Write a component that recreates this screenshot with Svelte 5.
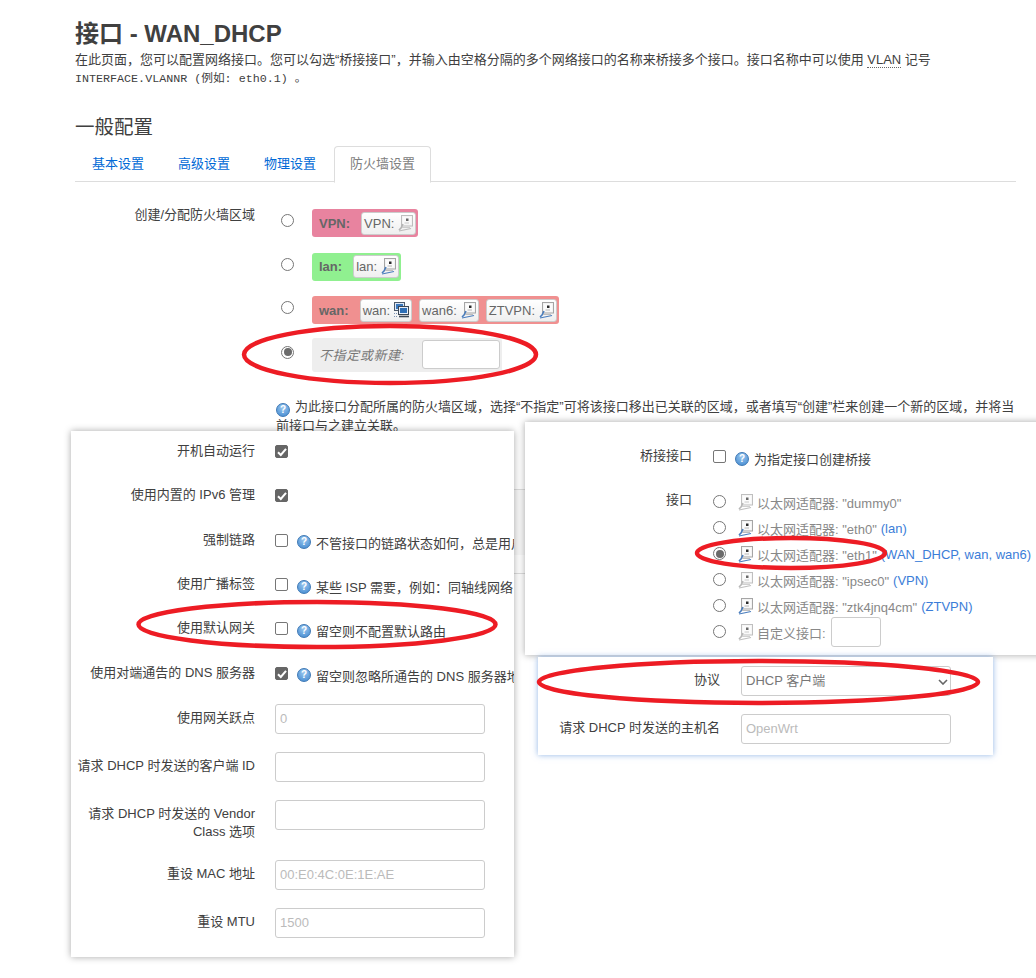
<script lang="ts">
  const zones = [
    { name: "VPN:", color: "#e8839f", chips: [{ label: "VPN:", icon: "port", dim: true }] },
    { name: "lan:", color: "#90f090", chips: [{ label: "lan:", icon: "port", dim: false }] },
    {
      name: "wan:",
      color: "#f09090",
      chips: [
        { label: "wan:", icon: "net", dim: false },
        { label: "wan6:", icon: "port", dim: false },
        { label: "ZTVPN:", icon: "port", dim: false },
      ],
    },
  ];

  const adapters = [
    { name: '以太网适配器: "dummy0"', link: "", dim: true },
    { name: '以太网适配器: "eth0"', link: "(lan)", dim: false },
    { name: '以太网适配器: "eth1"', link: "(WAN_DHCP, wan, wan6)", dim: false, on: true },
    { name: '以太网适配器: "ipsec0"', link: "(VPN)", dim: true },
    { name: '以太网适配器: "ztk4jnq4cm"', link: "(ZTVPN)", dim: false },
  ];

  const checkRows = [
    { label: "开机自动运行", on: true, help: "" },
    { label: "使用内置的 IPv6 管理", on: true, help: "" },
    { label: "强制链路", on: false, help: "不管接口的链路状态如何，总是用户" },
    { label: "使用广播标签", on: false, help: "某些 ISP 需要，例如：同轴线网络" },
    { label: "使用默认网关", on: false, help: "留空则不配置默认路由" },
    { label: "使用对端通告的 DNS 服务器", on: true, help: "留空则忽略所通告的 DNS 服务器地" },
  ];

  const inputRows = [
    { label: "使用网关跃点", placeholder: "0" },
    { label: "请求 DHCP 时发送的客户端 ID", placeholder: "" },
    { label: "请求 DHCP 时发送的 Vendor Class 选项", placeholder: "" },
    { label: "重设 MAC 地址", placeholder: "00:E0:4C:0E:1E:AE" },
    { label: "重设 MTU", placeholder: "1500" },
  ];

  const rings = [
    { cx: 390, cy: 354.5, rx: 146, ry: 28.5 },
    { cx: 317, cy: 624.5, rx: 178.5, ry: 22.5 },
    { cx: 791, cy: 553, rx: 94, ry: 15 },
    { cx: 758.5, cy: 682, rx: 219.5, ry: 21 },
  ];
</script>

{#snippet help()}
  <span class="help">?</span>
{/snippet}

{#snippet port(dim = false)}
  <svg class="ico" class:dim width="15" height="17" viewBox="0 0 15 17">
    <rect x="3.5" y="0.5" width="11" height="10.5" fill="#f3f3f3" stroke="#a5a5a5" />
    <rect x="5" y="2" width="8" height="7.5" fill="#fbfbfb" />
    <rect x="8" y="3.5" width="2.5" height="2.5" fill="#2b2b2b" />
    <path d="M6.5 8 H11" stroke="#b5b5b5" />
    <path d="M5 9 L3 13 L1 15" fill="none" stroke={dim ? "#9a9a9a" : "#4a7dbd"} stroke-width="1.6" />
    <path d="M1 16 L13 13.5" stroke={dim ? "#a5a5a5" : "#4a7dbd"} stroke-width="1.1" />
    <path d="M4 12.5 H12" stroke="#bdbdbd" stroke-width="1" />
  </svg>
{/snippet}

{#snippet net()}
  <svg class="ico" width="15" height="16" viewBox="0 0 15 16">
    <rect x="0.5" y="0.5" width="10" height="8" fill="#dfe8f5" stroke="#4d5a6b" />
    <rect x="2" y="2" width="7" height="5" fill="#3a78bd" />
    <rect x="4.5" y="4.5" width="10" height="8" fill="#e8eef8" stroke="#3d4855" />
    <rect x="6" y="6" width="7" height="5" fill="#2f6fb5" />
    <path d="M5 14.5 H15" stroke="#3d4855" stroke-width="1.6" />
    <path d="M0 11.5 H3 M0 14.5 H3" stroke="#7d93b5" stroke-width="1" stroke-dasharray="1 1" />
  </svg>
{/snippet}

{#snippet check(on)}
  <span class="check" class:on>
    {#if on}
      <svg width="14" height="14" viewBox="0 0 14 14">
        <path d="M3 7.2 L5.8 10 L11 3.8" fill="none" stroke="#fff" stroke-width="2" />
      </svg>
    {/if}
  </span>
{/snippet}

<div class="canvas">
  <div class="page">
    <h2>接口 - WAN_DHCP</h2>
    <p class="desc">
      在此页面，您可以配置网络接口。您可以勾选“桥接接口”，并输入由空格分隔的多个网络接口的名称来桥接多个接口。接口名称中可以使用 <abbr>VLAN</abbr> 记号<br />
      <code>INTERFACE.VLANNR (例如: eth0.1) 。</code>
    </p>
    <h3>一般配置</h3>
    <ul class="tabs">
      <li>基本设置</li>
      <li>高级设置</li>
      <li>物理设置</li>
      <li class="active">防火墙设置</li>
    </ul>

    <div class="zone-form">
      <div class="zone-label">创建/分配防火墙区域</div>
      <div class="zone-list">
        {#each zones as zone}
          <div class="zone-row">
            <span class="radio"></span>
            <div class="zone" style="background: {zone.color}">
              <b>{zone.name}</b>
              {#each zone.chips as chip}
                <span class="chip">
                  {chip.label}
                  {#if chip.icon === "net"}{@render net()}{:else}{@render port(chip.dim)}{/if}
                </span>
              {/each}
            </div>
          </div>
        {/each}
        <div class="zone-row last">
          <span class="radio on"></span>
          <div class="zone blank">
            <i>不指定或新建:</i>
            <span class="box"></span>
          </div>
        </div>
        <p class="zone-help">
          {@render help()}为此接口分配所属的防火墙区域，选择“不指定”可将该接口移出已关联的区域，或者填写“创建”栏来创建一个新的区域，并将当前接口与之建立关联。
        </p>
      </div>
    </div>
    <div class="band"></div>
    <div class="rule"></div>
  </div>

  <section class="panel left">
    {#each checkRows as row}
      <div class="row">
        <label class="lab" for="">{row.label}</label>
        {@render check(row.on)}
        {#if row.help}
          <span class="hint">{@render help()}{row.help}</span>
        {/if}
      </div>
    {/each}
    {#each inputRows as row}
      <div class="row field">
        <label class="lab" for="">{row.label}</label>
        <span class="box wide">{row.placeholder}</span>
      </div>
    {/each}
  </section>

  <section class="panel right">
    <div class="row bridge">
      <label class="lab" for="">桥接接口</label>
      {@render check(false)}
      <span class="hint">{@render help()}为指定接口创建桥接</span>
    </div>
    <div class="row ports">
      <label class="lab" for="">接口</label>
      <div class="port-list">
        {#each adapters as item}
          <div class="port-row">
            <span class="radio" class:on={item.on}></span>
            {@render port(item.dim)}
            <span>{item.name}</span>
            {#if item.link}<span class="link">{item.link}</span>{/if}
          </div>
        {/each}
        <div class="port-row">
          <span class="radio"></span>
          {@render port(true)}
          <span>自定义接口:</span>
          <span class="box small"></span>
        </div>
      </div>
    </div>
  </section>

  <section class="panel blue">
    <div class="row field">
      <label class="lab" for="">协议</label>
      <span class="box wide select">
        DHCP 客户端
        <svg width="10" height="6" viewBox="0 0 10 6">
          <path d="M1 1 L5 5 L9 1" fill="none" stroke="#666" stroke-width="1.6" />
        </svg>
      </span>
    </div>
    <div class="row field">
      <label class="lab" for="">请求 DHCP 时发送的主机名</label>
      <span class="box wide">OpenWrt</span>
    </div>
  </section>

  <svg class="rings" width="1036" height="978" viewBox="0 0 1036 978">
    {#each rings as r}
      <ellipse cx={r.cx} cy={r.cy} rx={r.rx} ry={r.ry} fill="none" stroke="#ed1c24" stroke-width="4.5" />
    {/each}
  </svg>
</div>

<style>
  :global(body) {
    margin: 0;
    background: #fff;
  }

  .canvas {
    position: relative;
    width: 1036px;
    height: 978px;
    overflow: hidden;
    font-family: "Liberation Sans", "Noto Sans CJK SC", sans-serif;
    font-size: 13px;
    color: #404040;
  }

  .page {
    padding: 20px 20px 0 75px;
  }

  h2 {
    margin: 0;
    font-size: 24px;
    line-height: 28px;
    color: #404040;
  }

  .desc {
    margin: 3px 0 0;
    line-height: 18px;
  }

  abbr {
    border-bottom: 1px dotted #666;
  }

  code {
    font-family: "Liberation Mono", "Noto Sans CJK SC", monospace;
    font-size: 11.7px;
  }

  h3 {
    margin: 25px 0 0;
    font-size: 19.5px;
    font-weight: 400;
    line-height: 28px;
  }

  .tabs {
    display: flex;
    margin: 5px 0 0;
    padding: 0;
    list-style: none;
    height: 35px;
    border-bottom: 1px solid #ddd;
  }

  .tabs li {
    padding: 0 17px;
    line-height: 35px;
    color: #0069d6;
  }

  .tabs .active {
    margin-left: 1px;
    padding: 0 15px;
    height: 35px;
    line-height: 34px;
    color: #808080;
    background: #fff;
    border: 1px solid #ddd;
    border-bottom: 1px solid #fff;
    border-radius: 4px 4px 0 0;
  }

  .zone-form {
    display: flex;
    margin-top: 24px;
  }

  .zone-label {
    width: 180px;
    text-align: right;
    line-height: 18px;
  }

  .zone-list {
    margin-left: 26px;
    padding-top: 3px;
    flex: 1;
    min-width: 0;
  }

  .zone-row {
    display: flex;
    align-items: center;
    height: 28px;
    margin-bottom: 15.5px;
    margin-top: 0;
  }

  .zone-row.last {
    height: 34px;
    margin-top: -2px;
    margin-bottom: 0;
  }

  .radio {
    position: relative;
    flex: none;
    box-sizing: border-box;
    width: 13px;
    height: 13px;
    border: 1px solid #767676;
    border-radius: 50%;
    background: #fff;
    margin-right: 18px;
    margin-top: -5px;
  }

  .radio.on::after {
    content: "";
    position: absolute;
    inset: 1.5px;
    border-radius: 50%;
    background: #6b6b6b;
  }

  .zone {
    display: flex;
    align-items: center;
    gap: 7px;
    height: 100%;
    padding: 0 2px 0 7px;
    border-radius: 3px;
  }

  .zone b {
    color: #666;
    margin-right: 4px;
  }

  .chip {
    display: flex;
    align-items: center;
    gap: 4px;
    height: 23px;
    padding: 0 2px;
    box-sizing: border-box;
    border: 1px solid #ccc;
    border-radius: 3px;
    background: linear-gradient(#fff, #efefef);
    color: #666;
  }

  .zone.blank {
    background: #eee;
    width: 190px;
    box-sizing: border-box;
    gap: 0;
  }

  .zone.blank i {
    color: #777;
    white-space: nowrap;
    margin-right: 17px;
    letter-spacing: 0.6px;
  }

  .zone.blank .box {
    width: 78px;
    height: 29px;
  }

  .box {
    display: block;
    box-sizing: border-box;
    flex: none;
    background: #fff;
    border: 1px solid #ccc;
    border-radius: 3px;
  }

  .zone-help {
    margin: 26px 0 0 -5px;
    line-height: 18px;
  }

  .help {
    display: inline-block;
    width: 14px;
    height: 14px;
    margin-right: 5px;
    border-radius: 50%;
    border: 1px solid #3d78b5;
    box-sizing: border-box;
    background: radial-gradient(circle at 50% 30%, #9cc8ef, #3f87cf);
    color: #fff;
    font-size: 10px;
    font-weight: 700;
    line-height: 12px;
    text-align: center;
    vertical-align: -2px;
  }

  .band {
    margin: 54px 0 0;
    height: 65px;
    background: #f8f8f8;
    border-top: 1px solid #ddd;
  }

  .rule {
    margin-top: 18px;
    border-top: 1px solid #ddd;
  }

  .panel {
    position: absolute;
    box-sizing: border-box;
    background: #fff;
    box-shadow: 0 0 7px rgba(0, 0, 0, 0.35);
  }

  .panel.left {
    left: 71px;
    top: 431px;
    width: 443px;
    height: 526px;
    padding: 8px 0 0;
    overflow: hidden;
  }

  .panel.right {
    left: 525px;
    top: 422px;
    width: 520px;
    height: 233px;
    overflow: hidden;
  }

  .panel.blue {
    left: 538px;
    top: 657px;
    width: 455px;
    height: 98px;
    padding-top: 9px;
    box-shadow: 0 0 6px rgba(74, 134, 214, 0.6);
  }

  .row {
    display: flex;
    align-items: center;
    white-space: nowrap;
    height: 26.3px;
    margin-bottom: 18px;
  }

  .panel.left .row:nth-child(6) {
    margin-bottom: 17px;
  }

  .lab {
    flex: none;
    width: 184px;
    text-align: right;
    white-space: normal;
    line-height: 18px;
    margin-right: 20px;
    position: relative;
    top: -1px;
  }

  .panel.blue .lab {
    width: 182px;
    margin-right: 21px;
  }

  .check {
    flex: none;
    box-sizing: border-box;
    width: 13px;
    height: 13px;
    border: 1px solid #767676;
    border-radius: 2px;
    background: #fff;
    display: block;
    margin-top: -1px;
  }

  .check.on {
    background: #666;
    border-color: #666;
  }

  .check svg {
    display: block;
    margin: -1px;
  }

  .hint {
    display: inline-flex;
    align-items: center;
    margin-left: 9px;
    margin-top: 3px;
  }

  .row.field {
    align-items: flex-start;
    height: auto;
    min-height: 30px;
    margin-bottom: 18px;
  }

  .row.field .lab {
    top: 5px;
  }

  .panel.left .row.field:nth-child(9) {
    min-height: 42px;
  }

  .box.wide {
    width: 210px;
    height: 30px;
    line-height: 28px;
    padding: 0 4px;
    color: #bbb;
    overflow: hidden;
  }

  .select {
    position: relative;
    color: #777 !important;
  }

  .select svg {
    position: absolute;
    right: 2px;
    top: 12px;
  }

  .row.bridge {
    height: 18px;
    margin: 26px 0 0;
  }

  .row.bridge .lab,
  .row.ports .lab {
    width: 167px;
    margin-right: 21px;
  }

  .row.ports {
    align-items: flex-start;
    height: auto;
    margin: 23px 0 0;
  }

  .row.ports .lab {
    top: 2px;
  }

  .port-list {
    display: flex;
    flex-direction: column;
    margin-top: 0;
  }

  .port-row {
    display: flex;
    align-items: center;
    gap: 4px;
    height: 26px;
    color: #888;
  }

  .port-row .radio {
    margin-right: 8px;
    margin-top: -1px;
  }

  .port-row .link {
    color: #3b7dd8;
  }

  .box.small {
    width: 50px;
    height: 30px;
    margin-left: 1px;
  }

  .ico {
    flex: none;
    display: block;
  }

  .ico.dim {
    opacity: 0.7;
  }

  .rings {
    position: absolute;
    left: 0;
    top: 0;
    pointer-events: none;
  }
</style>
